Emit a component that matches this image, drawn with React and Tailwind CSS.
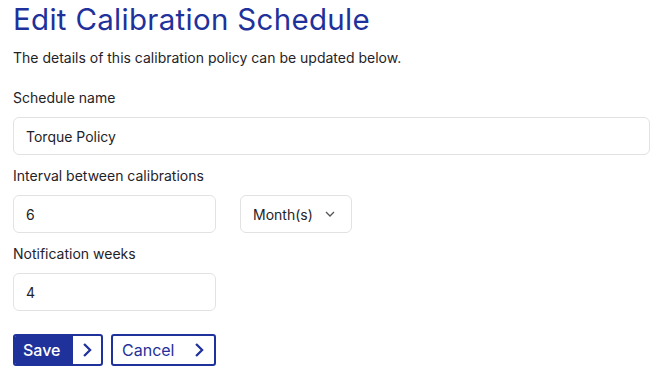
import { useState } from 'react'

// Edit form for a calibration schedule: name, interval + unit, notification weeks.
const BLUE = 'text-[#1f319b]'

function Chevron({ className = '' }) {
  return (
    <svg viewBox="0 0 10 16" className={`h-[14px] w-[9px] ${className}`} fill="none">
      <path d="M2 2l6 6-6 6" stroke="currentColor" strokeWidth="2.6" strokeLinecap="square" strokeLinejoin="miter" />
    </svg>
  )
}

function Field({ label, className = '', children }) {
  return (
    <div className={className}>
      <label className="block text-[14px] leading-5 text-[#1f2328]">{label}</label>
      <div className="mt-[9px]">{children}</div>
    </div>
  )
}

function TextInput({ value, onChange, className = '' }) {
  return (
    <input
      value={value}
      onChange={(e) => onChange(e.target.value)}
      className={`h-[38px] rounded-[6px] border border-[#e2e2e2] bg-white px-[12px] text-[14px] text-[#1f2328] outline-none ${className}`}
    />
  )
}

export default function App() {
  const [name, setName] = useState('Torque Policy')
  const [interval, setInterval] = useState('6')
  const [weeks, setWeeks] = useState('4')

  return (
    <div className="min-h-[388px] w-[652px] bg-white pl-[13px] pr-[2px] font-['Inter',sans-serif]">
      <h1 className={`pt-[2px] text-[29.5px] leading-[34px] tracking-[0.3px] ${BLUE}`}>
        Edit Calibration Schedule
      </h1>
      <p className="mt-[12px] text-[14px] leading-5 text-[#1f2328]">
        The details of this calibration policy can be updated below.
      </p>

      <Field label="Schedule name" className="mt-[20px]">
        <TextInput value={name} onChange={setName} className="w-full" />
      </Field>

      <Field label="Interval between calibrations" className="mt-[11px]">
        <div className="flex gap-[24px]">
          <TextInput value={interval} onChange={setInterval} className="w-[203px]" />
          <button className="flex h-[38px] w-[112px] items-center rounded-[6px] border border-[#e2e2e2] bg-white pl-[12px] text-[14px] text-[#1f2328]">
            Month(s)
            <svg viewBox="0 0 10 6" className="ml-[12px] h-[6px] w-[10px] text-[#555]" fill="none">
              <path d="M1 1l4 4 4-4" stroke="currentColor" strokeWidth="1.3" />
            </svg>
          </button>
        </div>
      </Field>

      <Field label="Notification weeks" className="mt-[11px]">
        <TextInput value={weeks} onChange={setWeeks} className="w-[203px]" />
      </Field>

      <div className="mt-[23px] flex gap-[8px]">
        <button className="flex h-[32px] w-[90px] items-stretch overflow-hidden rounded-[3px] border-2 border-[#1f319b] bg-white">
          <span className="flex w-[58px] items-center bg-[#1f319b] pl-[8px] text-[16px] font-medium text-white">Save</span>
          <span className={`flex flex-1 items-center justify-center ${BLUE}`}>
            <Chevron />
          </span>
        </button>
        <button className={`flex h-[32px] w-[105px] items-center justify-between rounded-[3px] border-2 border-[#1f319b] bg-white pl-[9px] pr-[10px] text-[16px] ${BLUE}`}>
          Cancel
          <Chevron />
        </button>
      </div>
    </div>
  )
}
